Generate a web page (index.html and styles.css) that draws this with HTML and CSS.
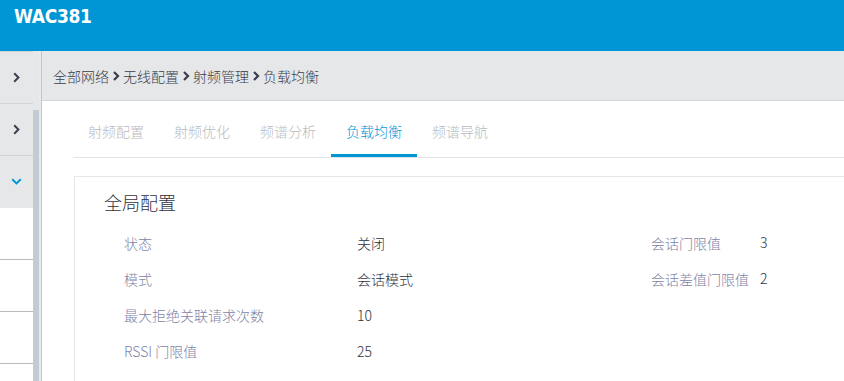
FILE: index.html
```html
<!DOCTYPE html>
<html lang="zh-CN">
<head>
    <meta charset="UTF-8">
    <meta name="viewport" content="width=device-width, initial-scale=1.0">
    <title>WAC381 负载均衡</title>
    <link rel="stylesheet" href="styles.css">
</head>
<body>
    <header class="topbar">
        <span class="brand">WAC381</span>
    </header>

    <div class="layout">
        <aside class="sidebar">
            <ul class="nav">
                <li class="nav-item">
                    <svg class="chev" width="7" height="11" viewBox="0 0 7 11"><path d="M1.2 1.2 L5.4 5.5 L1.2 9.8" fill="none" stroke="#3b3f4e" stroke-width="2"/></svg>
                </li>
                <li class="nav-item">
                    <svg class="chev" width="7" height="11" viewBox="0 0 7 11"><path d="M1.2 1.2 L5.4 5.5 L1.2 9.8" fill="none" stroke="#3b3f4e" stroke-width="2"/></svg>
                </li>
                <li class="nav-item open">
                    <svg class="chev" width="11" height="7" viewBox="0 0 11 7"><path d="M1.2 1.2 L5.5 5.4 L9.8 1.2" fill="none" stroke="#0096d6" stroke-width="2"/></svg>
                </li>
                <li class="nav-item blank"></li>
                <li class="nav-item blank"></li>
                <li class="nav-item blank"></li>
                <li class="nav-item blank"></li>
            </ul>
            <div class="scroll-track">
                <div class="scroll-thumb"></div>
            </div>
            <div class="edge"></div>
        </aside>

        <main class="content">
            <div class="crumbs">
                <span>全部网络</span>
                <svg class="sep" width="8" height="10" viewBox="0 0 8 10"><path d="M2 1 L6 5 L2 9" fill="none" stroke="#3a3d48" stroke-width="2.2"/></svg>
                <span>无线配置</span>
                <svg class="sep" width="8" height="10" viewBox="0 0 8 10"><path d="M2 1 L6 5 L2 9" fill="none" stroke="#3a3d48" stroke-width="2.2"/></svg>
                <span>射频管理</span>
                <svg class="sep" width="8" height="10" viewBox="0 0 8 10"><path d="M2 1 L6 5 L2 9" fill="none" stroke="#3a3d48" stroke-width="2.2"/></svg>
                <span>负载均衡</span>
            </div>

            <div class="panel">
                <div class="tabs">
                    <div class="tab">射频配置</div>
                    <div class="tab">射频优化</div>
                    <div class="tab">频谱分析</div>
                    <div class="tab active">负载均衡</div>
                    <div class="tab">频谱导航</div>
                </div>

                <section class="card">
                    <h2 class="card-title">全局配置</h2>
                    <div class="props">
                        <div class="label">状态</div>
                        <div class="value">关闭</div>
                        <div class="label">会话门限值</div>
                        <div class="value num">3</div>

                        <div class="label">模式</div>
                        <div class="value">会话模式</div>
                        <div class="label">会话差值门限值</div>
                        <div class="value num">2</div>

                        <div class="label">最大拒绝关联请求次数</div>
                        <div class="value">10</div>
                        <div></div>
                        <div></div>

                        <div class="label">RSSI 门限值</div>
                        <div class="value">25</div>
                        <div></div>
                        <div></div>
                    </div>
                </section>
            </div>
        </main>
    </div>
</body>
</html>
```

FILE: styles.css
```css
body {
    margin: 0;
    padding: 0;
    width: 844px;
    height: 381px;
    overflow: hidden;
    font-family: "Noto Sans CJK SC", "Noto Sans", sans-serif;
    font-weight: 300;
    background: #fff;
}

.topbar {
    height: 51px;
    background: #0096d6;
    padding-left: 14px;
    box-sizing: border-box;
}

.brand {
    display: block;
    line-height: 32px;
    font-family: "DejaVu Sans Condensed", "DejaVu Sans", sans-serif;
    font-stretch: condensed;
    font-weight: bold;
    font-size: 19px;
    color: #fff;
    letter-spacing: -0.3px;
}

.layout {
    display: flex;
    height: 330px;
    overflow: hidden;
}

/* left navigation */
.sidebar {
    display: flex;
    width: 42px;
    flex-shrink: 0;
    border-right: 1px solid #c4c6c9;
    box-sizing: border-box;
}

.nav {
    list-style: none;
    margin: 0;
    padding: 0;
    width: 33px;
    border-top: 1px solid #cfd1d4;
}

.nav-item {
    height: 51px;
    border-bottom: 1px solid #d2d4d6;
    background: #e6e7e9;
    display: flex;
    align-items: center;
    justify-content: center;
}

.nav-item.open {
    border-bottom-color: #e6e7e9;
}

.nav-item.blank {
    background: #fff;
    border-bottom-color: #b9b9b9;
}

.scroll-track {
    width: 6px;
    background: #e6e7e9;
}

.scroll-thumb {
    margin-top: 59px;
    height: 271px;
    background: #c3ccd5;
}

.edge {
    width: 2px;
    background: #e8e9ea;
}

/* main area */
.content {
    flex: 1;
    overflow: hidden;
}

.crumbs {
    height: 49px;
    background: #e6e7e9;
    border-bottom: 1px solid #d3d5d8;
    display: flex;
    align-items: center;
    padding-left: 11px;
    font-size: 14px;
    color: #3a3e4b;
}

.crumbs .sep {
    margin: 0 3px 0 3px;
}

.panel {
    padding-left: 31px;
}

.tabs {
    display: flex;
    border-bottom: 1px solid #e3e4e6;
}

.tab {
    height: 56px;
    box-sizing: border-box;
    padding: 19px 15px 0;
    line-height: 22px;
    font-size: 14px;
    color: #b9babd;
    border-bottom: 3px solid transparent;
}

.tab.active {
    color: #0096d6;
    border-bottom-color: #0096d6;
}

.card {
    margin: 18px -40px 0 1px;
    border: 1px solid #e6e7e9;
    padding: 12px 0 40px 29px;
}

.card-title {
    margin: 0;
    font-size: 18px;
    font-weight: 300;
    line-height: 26px;
    color: #2f3240;
}

.props {
    display: grid;
    grid-template-columns: 233px 294px 109px auto;
    grid-auto-rows: 36px;
    align-items: center;
    margin-top: 10px;
    padding-left: 20px;
    font-size: 14px;
}

.label {
    color: #7f83a6;
}

.value {
    color: #2f3240;
}

.value.num {
    margin-top: -3px;
}
```
